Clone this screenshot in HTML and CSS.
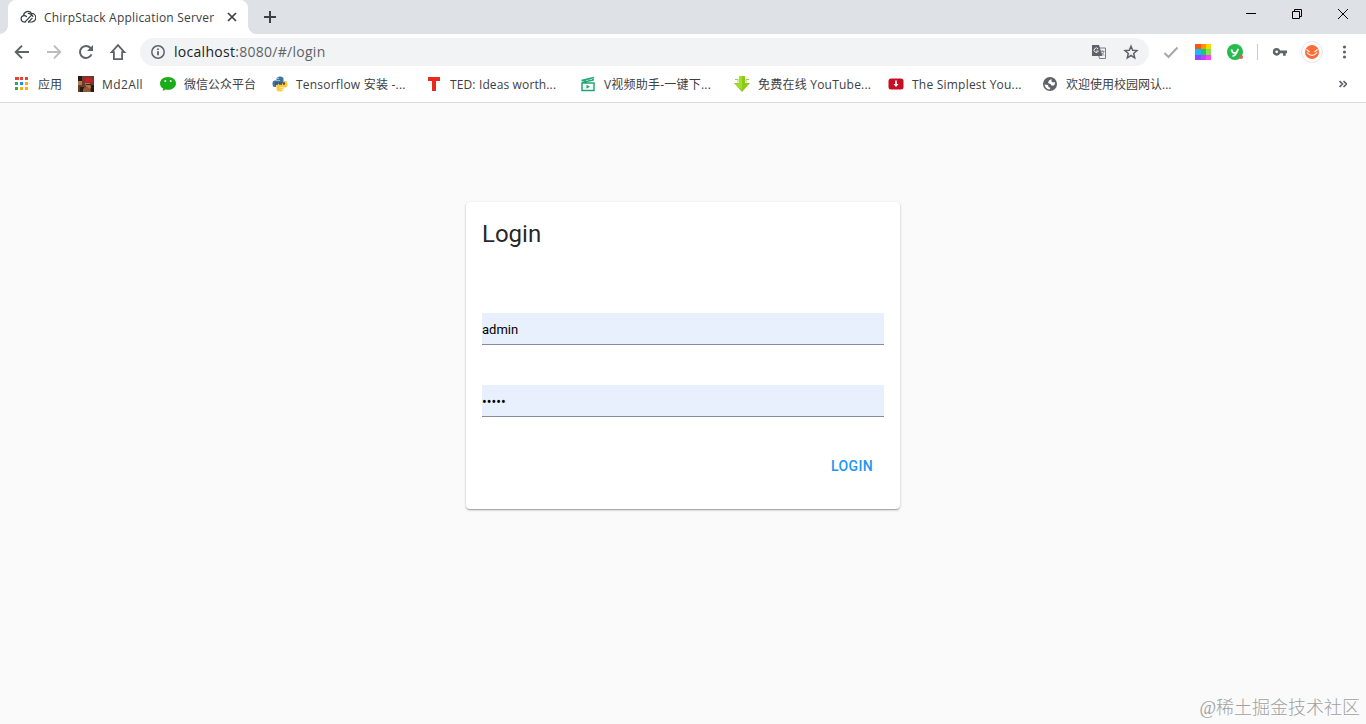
FILE: index.html
```html
<!DOCTYPE html>
<html lang="zh">
<head>
  <meta charset="utf-8">
  <title>ChirpStack Application Server</title>
  <link rel="stylesheet" href="styles.css">
</head>
<body>
  <header class="browser">
    <div class="tabstrip">
      <div class="tab">
        <svg class="favicon" width="16" height="16" viewBox="0 0 16 16" fill="none" stroke="#3c4043" stroke-width="1.200" stroke-linecap="round">
          <path d="M5 13H4A3.200 3.200 0 0 1 3.600 6.700 4.300 4.300 0 0 1 11.500 4.400a4.300 4.300 0 0 1 0 8.600H8.500"/>
          <path d="M5 13 11.600 6.200M3.700 6.700q1.500-.4 2.800.8M8.300 4.300q3.400.2 4.600 3.200M8.500 13l3.500-3.700"/>
        </svg>
        <span class="tab-title">ChirpStack Application Server</span>
        <svg class="tab-close" width="10" height="10" viewBox="0 0 10 10" stroke="#3c4043" stroke-width="1.7"><path d="M1 1l8 8M9 1L1 9"/></svg>
      </div>
      <svg class="new-tab" width="12" height="12" viewBox="0 0 12 12" stroke="#3c4043" stroke-width="2"><path d="M6 0v12M0 6h12"/></svg>
      <div class="window-buttons">
        <svg width="10" height="10" viewBox="0 0 10 10" stroke="#000"><path d="M0 4.500h10"/></svg>
        <svg width="10" height="10" viewBox="0 0 10 10" stroke="#000" fill="none"><path d="M.5 2.500h7v7h-7zM2.500 2.500v-2h7v7h-2"/></svg>
        <svg width="10" height="10" viewBox="0 0 10 10" stroke="#000"><path d="M0 0l10 10M10 0L0 10"/></svg>
      </div>
    </div>

    <div class="toolbar">
      <div class="nav">
        <svg width="20" height="20" viewBox="0 0 20 20" fill="none" stroke="#5f6368" stroke-width="1.900"><path d="M17 10H4M10 3.600 3.700 10l6.300 6.400"/></svg>
        <svg width="20" height="20" viewBox="0 0 20 20" fill="none" stroke="#babcbe" stroke-width="1.900"><path d="M3 10h13M10 3.600l6.300 6.400-6.300 6.400"/></svg>
        <svg width="20" height="20" viewBox="0 0 20 20" fill="none" stroke="#5f6368" stroke-width="2"><path d="M15.500 12.300a6 6 0 1 1-1-6.300L16 7.500"/><path d="M17 3v6h-6z" fill="#5f6368" stroke="none"/></svg>
        <svg width="20" height="20" viewBox="0 0 20 20" fill="none" stroke="#5f6368" stroke-width="1.800"><path d="M10 3.200 3.700 10.100h2.200v7h8.200v-7h2.200z"/></svg>
      </div>
      <div class="omnibox">
        <svg width="16" height="16" viewBox="0 0 16 16" fill="none" stroke="#5f6368" stroke-width="1.500"><circle cx="8" cy="8" r="6.200"/><path d="M8 7.200v4M8 4.500v1.600" stroke-width="1.800"/></svg>
        <span class="url"><b>localhost</b>:8080/#/login</span>
        <svg class="translate" width="16" height="16" viewBox="0 0 16 16">
          <path d="M6 4h8.500v10.500H8.500z" fill="#f1f3f4" stroke="#7b7f83"/>
          <path d="M1 1h7l3.500 11H1z" fill="#5f6368"/>
          <path d="M7.200 5A2.200 2.200 0 1 0 7.400 7H5.200" fill="none" stroke="#f1f3f4"/>
          <path d="M9.300 7.300h4.200M11.400 6.300v1M12.700 7.500c-.4 1.800-1.200 2.800-2.500 3.700M10.500 8.800l2.500 2.700" fill="none" stroke="#777b7f" stroke-width=".9"/>
        </svg>
        <svg width="16" height="16" viewBox="0 0 16 16" fill="none" stroke="#5f6368" stroke-width="1.500"><path d="M8 2.200 9.700 6.200l4.300.4-3.300 2.900 1 4.300L8 11.500l-3.700 2.300 1-4.300L2 6.600l4.300-.4z"/></svg>
      </div>
      <div class="extensions">
        <svg width="16" height="16" viewBox="0 0 16 16" fill="none" stroke="#a8a8a8" stroke-width="2"><path d="M1.500 9 5.500 13 14.500 3.500"/></svg>
        <svg width="16" height="16" viewBox="0 0 16 16" shape-rendering="crispEdges">
          <path fill="#ff5510" d="M0 0h6v5H0z"/><path fill="#ff9500" d="M6 0h5v5H6z"/><path fill="#ffd600" d="M11 0h5v5h-5z"/>
          <path fill="#18b8ff" d="M0 5h6v6H0z"/><path fill="#10cf68" d="M6 5h5v6H6z"/><path fill="#82e34a" d="M11 5h5v6h-5z"/>
          <path fill="#9147ff" d="M0 11h6v5H0z"/><path fill="#bd42ff" d="M6 11h5v5H6z"/><path fill="#ff42ff" d="M11 11h5v5h-5z"/>
        </svg>
        <svg width="16" height="16" viewBox="0 0 16 16"><circle cx="8" cy="8" r="8" fill="#24bd4c"/><path d="M4.300 5.500 5.500 8q1 1.500 3 .5M11.300 4.800 9 9.500Q8 12 5.500 12" fill="none" stroke="#fff" stroke-width="1.800"/><circle cx="14" cy="13" r="2" fill="#fa5252"/></svg>
        <span class="divider"></span>
        <svg width="16" height="16" viewBox="0 0 16 16" fill="#5f6368"><path fill-rule="evenodd" d="M4.700 4a3.800 3.800 0 1 0 3.500 5.200H11v2.600h2.700V9.200H15V6.400H8.200A3.800 3.800 0 0 0 4.700 4zm0 2.400a1.400 1.400 0 1 1 0 2.800 1.400 1.400 0 0 1 0-2.800z"/></svg>
        <span class="avatar">
          <svg width="14" height="14" viewBox="0 0 14 14"><circle cx="7" cy="7" r="7" fill="#ff6b35"/><path d="M1.500 4.500 4.500 7M12.500 4.500 9.500 7M1.800 7.500q5.200 6 10.400 0" fill="none" stroke="#fff" stroke-width="1.100"/></svg>
        </span>
        <svg width="16" height="16" viewBox="0 0 16 16" fill="#5f6368"><circle cx="8.500" cy="3" r="1.600"/><circle cx="8.500" cy="8" r="1.600"/><circle cx="8.500" cy="13" r="1.600"/></svg>
      </div>
    </div>

    <nav class="bookmarks">
      <a class="bookmark apps cjk">
        <svg width="16" height="16" viewBox="0 0 16 16" shape-rendering="crispEdges">
          <path fill="#ea4335" d="M1 1h4v3H1zM6 1h3v3H6zM11 1h3v3h-3z"/>
          <path fill="#34a853" d="M1 6h3v3H1zM1 11h3v3H1z"/><path fill="#1a8cff" d="M6 6h3v3H6z"/>
          <path fill="#fbae05" d="M11 6h3v3h-3zM6 11h3v3H6zM11 11h3v3h-3z"/>
        </svg>
        <span>应用</span>
      </a>
      <a class="bookmark md">
        <svg width="16" height="16" viewBox="0 0 16 16"><path fill="#6b3d28" d="M0 0h16v16H0z"/><path fill="#2b1a14" d="M0 0h4v5H0zM2 11h4v5H2zM13 9h3v7h-3z"/><path fill="#b07a50" d="M0 5h4v4H0zM7 7h5l1 5-4 2z"/><path fill="#c51e2b" d="M6 3q3-3 7-1 3 2 2 5l-4-1-4 1z"/><path fill="#8f5a38" d="M5 13l4-3 3 4 1 2H5z"/><path stroke="#3b2118" d="M8 8.500h5"/></svg>
        <span>Md2All</span>
      </a>
      <a class="bookmark wechat cjk">
        <svg width="16" height="16" viewBox="0 0 16 16"><path fill="#1aad19" d="M8 1C3.500 1 0 3.800 0 7.400c0 2.200 1.300 4 3.200 5.200L2.700 15l2.800-1.500q1.200.3 2.500.3c4.500 0 8-2.800 8-6.400S12.500 1 8 1z"/><circle cx="5.300" cy="5" r="1" fill="#fff"/><circle cx="10.700" cy="5" r="1" fill="#fff"/></svg>
        <span>微信公众平台</span>
      </a>
      <a class="bookmark">
        <svg width="16" height="16" viewBox="0 0 16 16"><path fill="#3c74a6" d="M4.500 3q0-2.500 3.500-2.500T11.500 3v3.500Q11.500 8 9.500 8h-3Q4 8 4 11H2.500Q.5 11 .5 7.500t3-3H8V4H4.500z"/><path fill="#f8ca3c" d="M11.500 13q0 2.500-3.500 2.500T4.500 13V9.500Q4.500 8 6.500 8h3Q12 8 12 5h1.500q2 0 2 3.500t-3 3H8v.5h3.500z"/><path d="M3 7.500h10" stroke="#6a4b45" stroke-width="2.500" stroke-dasharray="3 1"/><circle cx="6" cy="2.200" r=".7" fill="#fff"/><circle cx="10" cy="13.500" r=".7" fill="#fff"/></svg>
        <span>Tensorflow 安装 -...</span>
      </a>
      <a class="bookmark ted">
        <svg width="16" height="16" viewBox="0 0 16 16"><path fill="#e62b1e" d="M2 1h12v4h-4v10H6V5H2z"/></svg>
        <span>TED: Ideas worth...</span>
      </a>
      <a class="bookmark">
        <svg width="16" height="16" viewBox="0 0 16 16" fill="none" stroke="#20a775" stroke-width="1.500"><path d="M2 7h12v7.500H2zM1.500 4.500 14 1.500M2 6.500 14 3.700M4 3.500l1.500 2M8 2.500l1.500 2M12 2l1 2"/><path d="M6.500 8.700v4l3.500-2z" fill="#20a775" stroke="none"/></svg>
        <span>V视频助手-一键下...</span>
      </a>
      <a class="bookmark">
        <svg width="16" height="16" viewBox="0 0 16 16"><path fill="#8acb18" d="M5 0h6v7h5l-8 9-8-9h5z"/><path fill="#a6db2c" d="M5 0h3v14L1 7.500h4z"/><path d="M1 3.500h3v3M15 3.500h-3v3" stroke="#9bcf43" fill="none"/></svg>
        <span>免费在线 YouTube...</span>
      </a>
      <a class="bookmark">
        <svg width="16" height="16" viewBox="0 0 16 16"><rect x=".5" y="2.500" width="15" height="11" rx="2.500" fill="#c40f25"/><path fill="#fff" d="M7.200 4.500h1.600V8h1.700L8 11 5.500 8h1.700z"/></svg>
        <span>The Simplest You...</span>
      </a>
      <a class="bookmark cjk">
        <svg width="16" height="16" viewBox="0 0 16 16"><circle cx="8" cy="8" r="7" fill="#5f6368"/><path fill="#fff" d="M9.500 3 7 4.500 6 7l2.500 1 1 1.500H12q1.500-2 .8-3.500L11 6.500 9.500 5.500zM2.500 8.500q.8 4.300 5 5l1-1.500-2-1-.5-2z"/></svg>
        <span>欢迎使用校园网认...</span>
      </a>
      <svg class="overflow" width="8" height="8" viewBox="0 0 8 8" fill="none" stroke="#5f6368" stroke-width="1.700"><path d="M.5 1l3 3-3 3M4.500 1l3 3-3 3"/></svg>
    </nav>
  </header>

  <main class="page">
    <form class="card">
      <h1>Login</h1>
      <input type="text" value="admin">
      <input class="password" type="password" value="admin">
      <button type="button">Login</button>
    </form>
    <div class="watermark">@稀土掘金技术社区</div>
  </main>
</body>
</html>
```
FILE: styles.css
```css
* {
  box-sizing: border-box;
}

body {
  margin: 0;
  height: 724px;
  display: flex;
  flex-direction: column;
  overflow: hidden;
  background: #fafafa;
  font-family: "Open Sans", "Noto Sans CJK SC", sans-serif;
}

svg {
  flex: none;
  display: block;
}

.browser {
  height: 103px;
  background: #fff;
  border-bottom: 1px solid #dadce0;
}

/* tabs */
.tabstrip {
  height: 34px;
  display: flex;
  align-items: center;
  background: #dee1e6;
  padding-left: 8px;
}

.tab {
  position: relative;
  width: 240px;
  height: 34px;
  display: flex;
  align-items: center;
  padding: 0 11px 0 12px;
  background: #fff;
  border-radius: 8px 8px 0 0;
}

.tab::before,
.tab::after {
  content: "";
  position: absolute;
  bottom: 0;
  width: 8px;
  height: 8px;
}

.tab::before {
  left: -8px;
  background: radial-gradient(circle at 0 0, #dee1e6 7.5px, #fff 8px);
}

.tab::after {
  right: -8px;
  background: radial-gradient(circle at 100% 0, #dee1e6 7.5px, #fff 8px);
}

.tab-title {
  margin-left: 8px;
  font-size: 12px;
  letter-spacing: .2px;
  color: #3c4043;
  white-space: nowrap;
}

.tab-close {
  margin-left: auto;
}

.new-tab {
  margin-left: 16px;
}

.window-buttons {
  display: flex;
  gap: 36px;
  margin: -6px 18px 0 auto;
}

/* address bar */
.toolbar {
  height: 36px;
  display: flex;
  align-items: center;
}

.nav {
  display: flex;
  gap: 12px;
  padding-left: 12px;
}

.omnibox {
  width: 1009px;
  height: 28px;
  margin-left: 12px;
  padding: 0 10px;
  display: flex;
  align-items: center;
  background: #f1f3f4;
  border-radius: 14px;
}

.url {
  margin-left: 8px;
  padding-bottom: 2px;
  font-size: 14px;
  letter-spacing: .28px;
  color: #5f6368;
}

.url b {
  font-weight: normal;
  color: #202124;
}

.translate {
  margin-left: auto;
  margin-right: 16px;
}

.extensions {
  display: flex;
  align-items: center;
  gap: 16px;
  padding-left: 14px;
}

.divider {
  width: 1px;
  height: 16px;
  margin: 0 -2px;
  background: #cacdd1;
}

.avatar {
  width: 22px;
  height: 22px;
  margin: 0 -3px;
  display: flex;
  align-items: center;
  justify-content: center;
  border: 1px solid #e4e6e8;
  border-radius: 50%;
}

/* bookmarks */
.bookmarks {
  height: 28px;
  display: flex;
  align-items: center;
  padding: 0 19px 0 14px;
}

.bookmark {
  width: 154px;
  display: flex;
  align-items: center;
  gap: 8px;
  font-size: 12px;
  line-height: 16px;
  letter-spacing: .22px;
  color: #3c4043;
  white-space: nowrap;
}

.bookmark span {
  padding-top: 2px;
}

.bookmark.cjk {
  letter-spacing: 0;
}

.bookmark.ted {
  letter-spacing: .13px;
}

.apps {
  width: 64px;
}

.bookmark.md {
  width: 82px;
  letter-spacing: .4px;
}

.wechat {
  width: 112px;
}

.overflow {
  margin-left: auto;
}

/* login page */
.page {
  position: relative;
  flex: 1;
  font-family: Roboto, sans-serif;
}

.card {
  width: 434px;
  height: 307px;
  margin: 99px auto 0;
  padding: 16px;
  display: flex;
  flex-direction: column;
  background: #fff;
  border-radius: 4px;
  box-shadow: 0 1px 3px rgba(0, 0, 0, .2), 0 1px 1px rgba(0, 0, 0, .14), 0 2px 1px -1px rgba(0, 0, 0, .12);
}

.card h1 {
  margin: 0 0 63px;
  font-size: 24px;
  font-weight: 400;
  line-height: 32px;
  color: rgba(0, 0, 0, .87);
}

.card input {
  width: 402px;
  height: 32px;
  margin: 0 0 40px;
  padding: 2px 0 0;
  border: 0;
  border-bottom: 1px solid #868b97;
  background: #e8f0fe;
  font: 13px Roboto, sans-serif;
  color: #000;
}

.card .password {
  font-size: 14px;
}

.card button {
  align-self: flex-end;
  width: 64px;
  height: 36px;
  margin-top: -9px;
  padding: 0;
  border: 0;
  background: none;
  font: 500 14px Roboto, sans-serif;
  letter-spacing: .4px;
  text-transform: uppercase;
  color: #2196f3;
}

.watermark {
  position: absolute;
  right: 6px;
  bottom: 4px;
  font: 300 18px/24px "Liberation Serif", "Noto Sans CJK SC", serif;
  color: #a0a0a0;
  text-shadow: 0 0 2px #fff;
}
```
